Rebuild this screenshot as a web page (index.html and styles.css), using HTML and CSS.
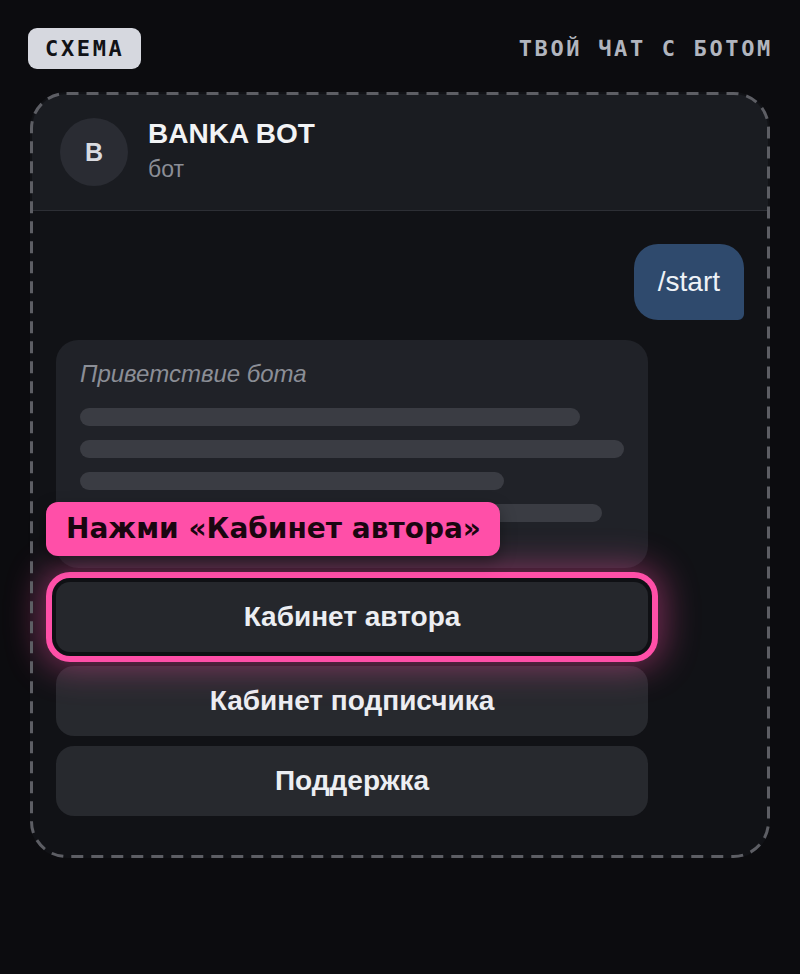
FILE: index.html
```html
<!DOCTYPE html>
<html lang="ru">
<head>
<meta charset="utf-8">
<title>Схема</title>
<link rel="stylesheet" href="styles.css">
</head>
<body>
<div class="page">
  <div class="topbar">
    <span class="badge">СХЕМА</span>
    <span class="topnote">ТВОЙ ЧАТ С БОТОМ</span>
  </div>
  <div class="card">
    <svg class="dash" viewBox="0 0 740 766" preserveAspectRatio="none" aria-hidden="true">
      <rect x="1.5" y="1.5" width="737" height="763" rx="35" ry="35" fill="none" stroke="#5d5e64" stroke-width="3" stroke-dasharray="12 8"/>
    </svg>
    <div class="header">
      <div class="avatar">B</div>
      <div class="who">
        <div class="name">BANKA BOT</div>
        <div class="role">бот</div>
      </div>
    </div>
    <div class="chat">
      <div class="row-user">
        <div class="user-msg">/start</div>
      </div>
      <div class="bot">
        <div class="bubble">
          <div class="greet">Приветствие бота</div>
          <div class="lines">
            <div class="line" style="width:92%"></div>
            <div class="line" style="width:100%"></div>
            <div class="line" style="width:78%"></div>
            <div class="line" style="width:96%"></div>
          </div>
        </div>
        <div class="tag">Нажми «Кабинет автора»</div>
        <div class="btn active">Кабинет автора</div>
        <div class="btn">Кабинет подписчика</div>
        <div class="btn">Поддержка</div>
      </div>
    </div>
  </div>
</div>
</body>
</html>
```
FILE: styles.css
```css
* { box-sizing: border-box; }
html, body { margin: 0; padding: 0; }
body {
  background: #0c0c0f;
  font-family: "Liberation Sans", Arial, sans-serif;
  color: #eceef2;
  width: 800px;
  height: 974px;
  overflow: hidden;
}
.page {
  padding: 28px 28px 0 28px;
}
.topbar {
  display: flex;
  justify-content: space-between;
  align-items: center;
  height: 41px;
}
.badge {
  display: inline-block;
  height: 41px;
  line-height: 41px;
  padding: 0 17px 0 17px;
  background: #d6d8df;
  color: #111216;
  border-radius: 9px;
  font-family: "DejaVu Sans Mono", monospace;
  font-weight: bold;
  font-size: 22px;
  letter-spacing: 2.65px;
}
.topnote {
  font-family: "DejaVu Sans Mono", monospace;
  font-weight: bold;
  font-size: 22px;
  letter-spacing: 2.65px;
  color: #b1b5be;
  margin-right: -1px;
}
.card {
  position: relative;
  margin: 23px 2px 0 2px;
  padding: 2px;
  border-radius: 36px;
  background: #111216;
}
.dash {
  position: absolute;
  left: 0;
  top: 0;
  width: 100%;
  height: 100%;
  pointer-events: none;
  z-index: 5;
}
.header {
  display: flex;
  align-items: center;
  gap: 20px;
  padding: 24px 28px;
  background: #1a1c21;
  border-bottom: 1px solid #2d2f35;
  border-radius: 34px 34px 0 0;
}
.avatar {
  width: 68px;
  height: 68px;
  border-radius: 50%;
  background: #2a2c33;
  color: #d9dbe0;
  font-weight: bold;
  font-size: 25px;
  display: flex;
  align-items: center;
  justify-content: center;
}
.who {
  display: flex;
  flex-direction: column;
  gap: 7px;
  padding-bottom: 3px;
}
.name {
  font-size: 28px;
  line-height: 30px;
  font-weight: bold;
  color: #f2f3f5;
}
.role {
  font-size: 23px;
  line-height: 26px;
  color: #8b8e96;
}
.chat {
  padding: 33px 24px 40px 24px;
  display: flex;
  flex-direction: column;
  gap: 20px;
}
.row-user {
  display: flex;
  justify-content: flex-end;
}
.user-msg {
  background: #2f4a6d;
  color: #eef2f7;
  font-size: 28px;
  line-height: 34px;
  padding: 21px 24px;
  border-radius: 24px 24px 6px 24px;
}
.bot {
  position: relative;
  width: 592px;
  display: flex;
  flex-direction: column;
  gap: 10px;
}
.bubble {
  background: #202228;
  border-radius: 22px;
  padding: 20px 24px 46px 24px;
}
.greet {
  font-style: italic;
  font-size: 24px;
  line-height: 28px;
  color: #8b8e96;
  margin-bottom: 20px;
}
.lines {
  display: flex;
  flex-direction: column;
  gap: 14px;
}
.line {
  height: 18px;
  border-radius: 9px;
  background: #3a3c43;
}
.tag {
  position: absolute;
  left: -10px;
  top: 162px;
  z-index: 4;
  background: #ff4fa8;
  color: #1a0610;
  font-family: "DejaVu Sans", sans-serif;
  font-weight: bold;
  font-size: 28px;
  line-height: 30px;
  padding: 12px 19px 12px 20px;
  border-radius: 12px;
  box-shadow: 0 6px 16px rgba(0, 0, 0, 0.35);
}
.btn {
  height: 70px;
  border-radius: 18px;
  background: #27292e;
  color: #eceef2;
  font-weight: bold;
  font-size: 28px;
  display: flex;
  align-items: center;
  justify-content: center;
}
.btn.active {
  position: relative;
  z-index: 3;
  margin: 4px 0;
  background: #25272c;
  border-radius: 14px;
  box-shadow: 0 0 0 4px #0f1014, 0 0 0 10px #ff4fa8, 0 0 34px 16px rgba(255, 79, 168, 0.42);
}
```
